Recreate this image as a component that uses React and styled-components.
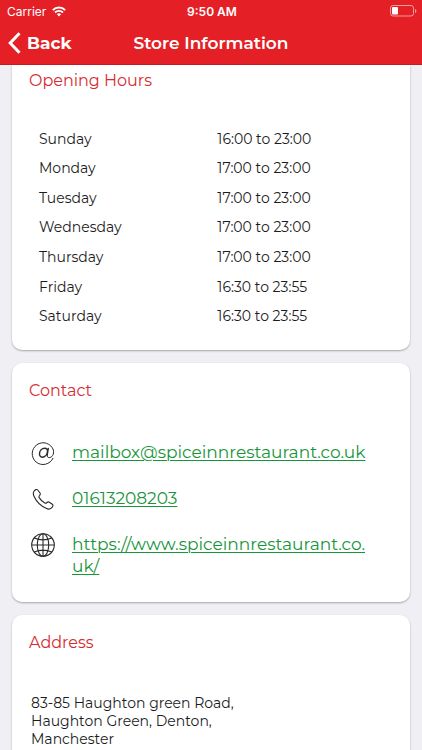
import React from 'react';
import styled, { createGlobalStyle } from 'styled-components';

const HOURS = [
  { day: 'Sunday', time: '16:00 to 23:00' },
  { day: 'Monday', time: '17:00 to 23:00' },
  { day: 'Tuesday', time: '17:00 to 23:00' },
  { day: 'Wednesday', time: '17:00 to 23:00' },
  { day: 'Thursday', time: '17:00 to 23:00' },
  { day: 'Friday', time: '16:30 to 23:55' },
  { day: 'Saturday', time: '16:30 to 23:55' },
];

const WifiIcon = () => (
  <svg width="14" height="11" viewBox="0 0 14 11" fill="none" stroke="#fff" strokeWidth="1.9" aria-hidden="true">
    <path d="M.8 4.1a8.8 8.8 0 0 1 12.4 0" />
    <path d="M3 6.5a5.7 5.7 0 0 1 8 0" />
    <path d="M7 10.4 4.9 8.2a3 3 0 0 1 4.2 0z" fill="#fff" stroke="none" />
  </svg>
);

const BatteryIcon = () => (
  <svg width="27" height="12" viewBox="0 0 27 12" fill="none" aria-hidden="true">
    <rect x=".5" y=".5" width="23" height="10.5" rx="2.5" stroke="#fff" strokeOpacity=".55" />
    <rect x="2" y="2" width="6" height="7.5" rx="1" fill="#fff" />
    <path d="M25 4v4c.9-.4 1.4-1.1 1.4-2S25.9 4.4 25 4z" fill="#fff" fillOpacity=".55" />
  </svg>
);

const BackIcon = () => (
  <svg width="13" height="22" viewBox="0 0 13 22" fill="none" stroke="#fff" strokeWidth="3" aria-hidden="true">
    <path d="M11.5 1.2 2.2 11l9.3 9.8" />
  </svg>
);

const AtIcon = () => (
  <svg width="24" height="24" viewBox="0 0 24 24" fill="none" stroke="#2a2a2a" strokeLinecap="round" aria-hidden="true">
    <path strokeWidth="1" d="M22 17.3A10.900 10.900 0 1 1 22.400 9c.9 4.300-1.500 7.600-4.200 7.600-1.600 0-2.200-1.100-1.900-2.700" />
    <path strokeWidth="1.400" d="M17.300 7.400 16.200 14M16.500 10.700c.2-2.200-.9-3.500-2.700-3.500-2.900 0-5.100 2.400-5.300 5.300-.1 2.300.9 3.700 2.700 3.700 2.700 0 4.900-2.500 5.300-5.500z" />
  </svg>
);

const PhoneIcon = () => (
  <svg width="24" height="24" viewBox="0 0 24 24" fill="none" stroke="#2a2a2a" strokeWidth="1.1" strokeLinejoin="round" aria-hidden="true">
    <path d="M3 4.200c1-1.400 2.700-2.400 3.800-1.200L9 6c.6.900.4 1.500-.3 2.300-.8.8-1.100 1.300-.5 2.300 1.200 2.100 3.300 4.100 5.600 5.400.9.500 1.500.2 2.200-.5.700-.7 1.400-.8 2.300-.3l3 2c1.200.9.6 2.300-.5 3.400-1.500 1.600-3.200 1.900-5.200 1C10 19.200 5.200 14.300 3 9.300c-.9-2-1-3.700 0-5.100z" />
  </svg>
);

const GlobeIcon = () => (
  <svg width="24" height="24" viewBox="0 0 24 24" fill="none" stroke="#2a2a2a" strokeWidth="1.1" aria-hidden="true">
    <circle cx="12" cy="12" r="11.3" />
    <ellipse cx="12" cy="12" rx="5.7" ry="11.3" />
    <path d="M12 .7v22.6M.7 12h22.6M3.2 5c5.300 2.200 12.300 2.200 17.600 0M3.2 19c5.300-2.200 12.300-2.200 17.600 0" />
  </svg>
);

const App = () => {
  return (
    <Page>
      <GlobalStyle />
      <Header>
        <StatusBar>
          <Carrier>
            Carrier <WifiIcon />
          </Carrier>
          <Clock>9:50 AM</Clock>
          <Battery>
            <BatteryIcon />
          </Battery>
        </StatusBar>
        <NavBar>
          <BackButton type="button">
            <BackIcon />
            Back
          </BackButton>
          <Title>Store Information</Title>
        </NavBar>
      </Header>

      <Content>
        <Card $flush>
          <CardTitle id="hours">Opening Hours</CardTitle>
          <HoursTable aria-labelledby="hours">
            <tbody>
              {HOURS.map(({ day, time }) => (
                <tr key={day}>
                  <th scope="row">{day}</th>
                  <td>{time}</td>
                </tr>
              ))}
            </tbody>
          </HoursTable>
        </Card>

        <Card>
          <CardTitle>Contact</CardTitle>
          <ContactList>
            <ContactRow>
              <AtIcon />
              <ContactLink href="mailto:mailbox@spiceinnrestaurant.co.uk">
                mailbox@spiceinnrestaurant.co.uk
              </ContactLink>
            </ContactRow>
            <ContactRow>
              <PhoneIcon />
              <ContactLink href="tel:01613208203">01613208203</ContactLink>
            </ContactRow>
            <ContactRow>
              <GlobeIcon />
              <ContactLink href="https://www.spiceinnrestaurant.co.uk/">
                https://www.spiceinnrestaurant.co.<wbr />uk/
              </ContactLink>
            </ContactRow>
          </ContactList>
        </Card>

        <Card>
          <CardTitle>Address</CardTitle>
          <Address>
            83-85 Haughton green Road,
            <br />
            Haughton Green, Denton,
            <br />
            Manchester
          </Address>
        </Card>
      </Content>
    </Page>
  );
};

const GlobalStyle = createGlobalStyle`
  * {
    box-sizing: border-box;
  }

  body {
    margin: 0;
    background: #efeff4;
    color: #1c1c1c;
    font-family: Montserrat, Inter, sans-serif;
  }
`;

const Page = styled.div`
  display: flex;
  flex-direction: column;
  height: 100vh;
  overflow: hidden;
`;

const Header = styled.header`
  flex: none;
  background: #e41f26;
  border-bottom: 1px solid #c41c22;
  color: #fff;
`;

const StatusBar = styled.div`
  display: grid;
  grid-template-columns: 1fr auto 1fr;
  align-items: center;
  height: 22px;
  padding: 0 5px 0 7px;
  font-family: Inter, sans-serif;
  font-size: 12px;
`;

const Carrier = styled.span`
  display: flex;
  align-items: center;
  gap: 6px;
`;

const Clock = styled.span`
  font-weight: 600;
`;

const Battery = styled.span`
  display: flex;
  justify-content: flex-end;
`;

const NavBar = styled.div`
  display: grid;
  grid-template-columns: 1fr auto 1fr;
  align-items: center;
  height: 42px;
  padding: 0 8px;
`;

const BackButton = styled.button`
  display: flex;
  align-items: center;
  gap: 6px;
  justify-self: start;
  padding: 0;
  border: 0;
  background: none;
  color: inherit;
  font: inherit;
  font-size: 17px;
  font-weight: 700;
  cursor: pointer;
`;

const Title = styled.h1`
  margin: 0;
  font-size: 17px;
  font-weight: 600;
`;

const Content = styled.main`
  flex: 1;
  display: flex;
  flex-direction: column;
  gap: 13px;
  min-height: 0;
  padding: 0 12px;
  overflow-y: auto;
  scrollbar-width: none;
`;

const Card = styled.section`
  flex: none;
  padding: ${({ $flush }) => ($flush ? '5px' : '17px')} 17px 19px;
  border-radius: ${({ $flush }) => ($flush ? '0 0 10px 10px' : '10px')};
  background: #fff;
  box-shadow: 0 1px 2px rgba(0, 0, 0, 0.3);
`;

const CardTitle = styled.h2`
  margin: 0;
  color: #d62b31;
  font-size: 16px;
  font-weight: 400;
  line-height: 22px;
`;

const HoursTable = styled.table`
  width: 100%;
  height: 207px;
  margin-top: 32px;
  border-collapse: collapse;
  font-size: 14px;
  line-height: 18px;

  th,
  td {
    padding: 0 0 0 10px;
    text-align: left;
    font-weight: 400;
  }

  th {
    width: 49%;
  }
`;

const ContactList = styled.ul`
  display: flex;
  flex-direction: column;
  gap: 22px;
  margin: 39px 0 6px;
  padding: 0;
  list-style: none;
`;

const ContactRow = styled.li`
  display: flex;
  align-items: flex-start;
  gap: 17px;
  padding: 0 20px 0 2px;

  svg {
    flex: none;
  }
`;

const ContactLink = styled.a`
  color: #16953a;
  font-size: 17px;
  line-height: 22px;
  text-underline-offset: 2px;
  text-decoration-thickness: 1px;
`;

const Address = styled.address`
  margin-top: 40px;
  padding-left: 2px;
  font-size: 14px;
  font-style: normal;
  line-height: 18px;
`;

export default App;
